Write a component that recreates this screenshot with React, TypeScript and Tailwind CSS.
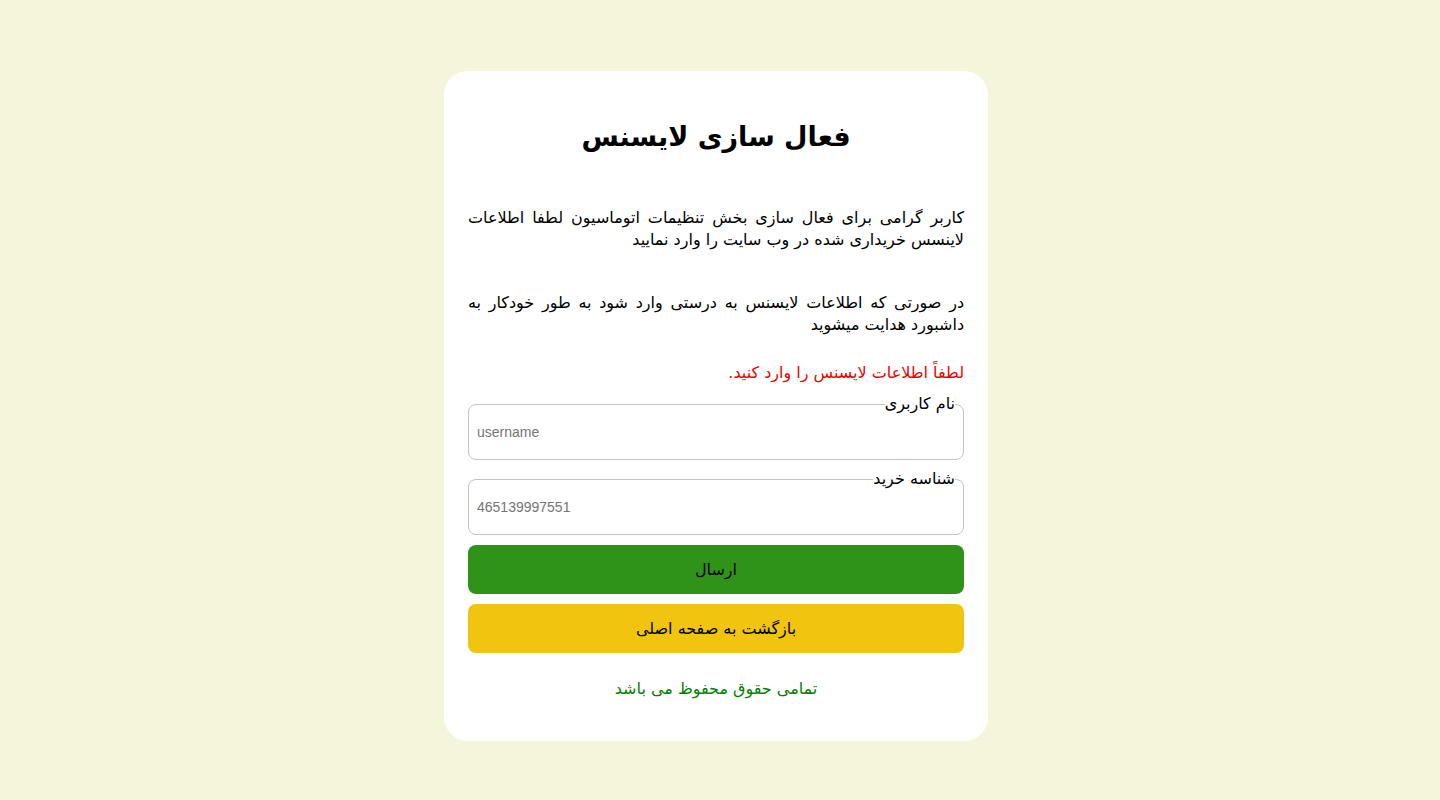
import { useState } from 'react';

const fa = { fontFamily: '"DejaVu Sans", "Noto Sans", sans-serif' };

function Field({ label, value, onChange, placeholder }: { label: string; value: string; onChange: (v: string) => void; placeholder: string }) {
  return (
    <fieldset className="border border-[#c4c4c4] rounded-lg px-2 pb-[11px]">
      <legend className="text-base leading-6 text-black px-0">{label}</legend>
      <input
        dir="ltr"
        value={value}
        onChange={(e) => onChange(e.target.value)}
        placeholder={placeholder}
        className="w-full h-[33px] -mt-[1px] bg-transparent text-sm text-gray-800 placeholder:text-[#757575] outline-none"
        style={{ fontFamily: '"Liberation Sans", Arial, sans-serif' }}
      />
    </fieldset>
  );
}

export default function App() {
  const [username, setUsername] = useState('');
  const [orderId, setOrderId] = useState('');

  return (
    <div dir="rtl" className="min-h-screen bg-[#f5f5dc] flex justify-center pt-[71px] pr-2" style={fa}>
      <div className="w-[544px] h-[670px] bg-white rounded-[24px] px-6 pt-[115px] flex flex-col">
        <h1 className="text-[27px] leading-[40px] font-bold text-black text-center -mt-[69px]">فعال سازی لایسنس</h1>

        <p className="mt-[50px] text-base leading-[22px] text-black text-justify">
          کاربر گرامی برای فعال سازی بخش تنظیمات اتوماسیون لطفا اطلاعات لاینسس خریداری شده در وب سایت را وارد نمایید
        </p>
        <p className="mt-[41px] text-base leading-[22px] text-black text-justify">
          در صورتی که اطلاعات لایسنس به درستی وارد شود به طور خودکار به داشبورد هدایت میشوید
        </p>

        <p className="mt-[26px] text-base leading-[22px] text-[#ee0000]">لطفاً اطلاعات لایسنس را وارد کنید.</p>

        <form onSubmit={(e) => e.preventDefault()} className="flex flex-col mt-[8px]">
          <Field label="نام کاربری" value={username} onChange={setUsername} placeholder="username" />
          <div className="h-[7px]" />
          <Field label="شناسه خرید" value={orderId} onChange={setOrderId} placeholder="465139997551" />
          <button type="submit" className="mt-[10px] h-[49px] rounded-lg bg-[#2e9318] text-black text-base">ارسال</button>
          <button type="button" className="mt-[10px] h-[49px] rounded-lg bg-[#f1c40f] text-black text-base">بازگشت به صفحه اصلی</button>
        </form>

        <p className="mt-[25px] text-center text-base leading-[22px] text-[#008000]">تمامی حقوق محفوظ می باشد</p>
      </div>
    </div>
  );
}
